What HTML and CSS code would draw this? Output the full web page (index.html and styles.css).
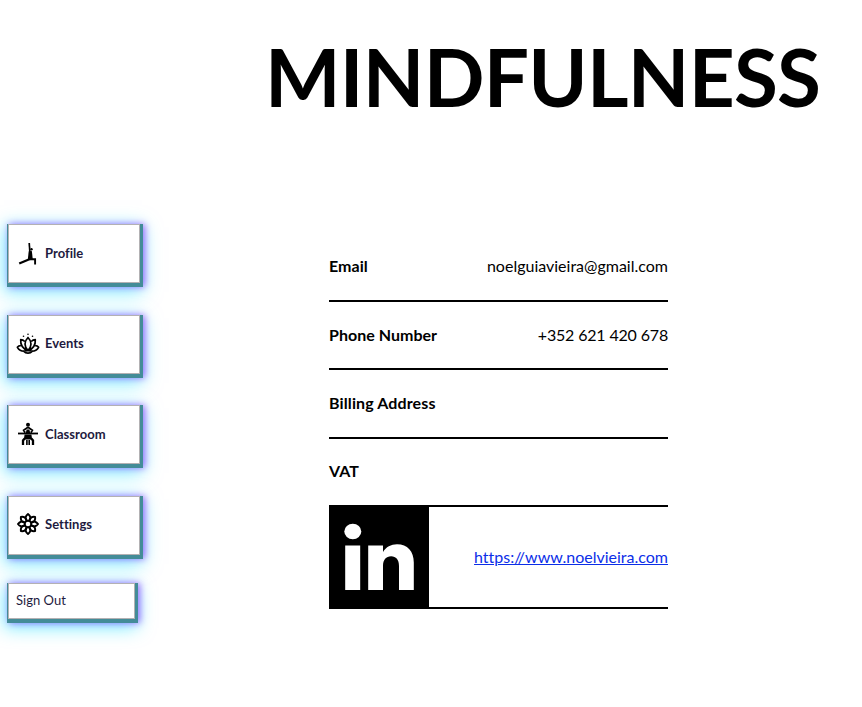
FILE: index.html
```html
<!DOCTYPE html>
<html lang="en">
<head>
<meta charset="utf-8">
<title>Mindfulness</title>
<link rel="stylesheet" href="styles.css">
</head>
<body>
<header class="masthead"><h1>MINDFULNESS</h1></header>
<div class="layout">
  <nav class="menu">
    <a class="card">
      <svg class="icon" viewBox="0 0 24 24" fill="none" stroke="#000"><path d="M13.200 2l.7 9" stroke-width="1.700"/><path d="M12.700 10.200l3.100-.2 1 8.200-5 .5z" fill="#000" stroke="none"/><circle cx="15.500" cy="8.200" r="1.200" fill="#000" stroke="none"/><path d="M14 18L3.200 22.600" stroke-width="2.200"/><path d="M13.500 18.200h5.600v5.300" stroke-width="1.900"/></svg>
      <span>Profile</span>
    </a>
    <a class="card">
      <svg class="icon" viewBox="0 0 24 24" fill="none" stroke="#000" stroke-width="1.700" stroke-linejoin="round"><path d="M12 6.500c-4 4-4 9 0 13 4-4 4-9 0-13zM8.800 10.500C7.500 9.300 6.100 8.800 4.700 8.700c-.3 5 2 9.100 7.300 10.800 5.300-1.700 7.600-5.800 7.300-10.800-1.400.1-2.800.6-4.100 1.800M4.800 14.600c-1.400 0-2.700.6-3.400 1.700 2.300 4 6.600 4.500 10.600 3.200 4 1.300 8.300.8 10.600-3.200-.7-1.100-2-1.700-3.400-1.700M8 20.500c1 1.300 2.300 1.600 4 1.600s3-.3 4-1.600"/><g fill="#000" stroke="none"><circle cx="12" cy="3.300" r=".8"/><circle cx="7.500" cy="5.300" r=".8"/><circle cx="16.500" cy="5.300" r=".8"/></g></svg>
      <span>Events</span>
    </a>
    <a class="card">
      <svg class="icon" viewBox="0 0 24 24" fill="none" stroke="#000"><circle cx="12" cy="2.800" r="2" fill="#000" stroke="none"/><path d="M12 5.300L7.600 8.200l1.500 2.500M12 5.300l4.400 2.900-1.500 2.500" stroke-width="1.700"/><path d="M10.700 7.500h2.600l1.300 4.500H9.400z" fill="#000" stroke="none"/><path d="M2 11.500h20" stroke-width="1.800"/><path d="M8.600 12.500h6.800l.8 5H7.800z" fill="#000" stroke="none"/><path d="M8.700 16.500L7 18.500V23M15.300 16.500l1.700 2V23" stroke-width="2.300"/><path d="M10.900 18v5M13.200 18v5" stroke-width="1.600"/></svg>
      <span>Classroom</span>
    </a>
    <a class="card">
      <svg class="icon" viewBox="0 0 24 24" fill="none" stroke="#000" stroke-width="2" stroke-linejoin="round"><circle cx="12" cy="12" r="3.300"/><g id="pair"><path d="M10.700 8.700C8.500 6 9.800 3.600 12 2c2.200 1.600 3.500 4 1.300 6.700M10.700 15.300c-2.200 2.700-.9 5.100 1.300 6.700 2.200-1.600 3.500-4 1.300-6.700"/></g><use href="#pair" transform="rotate(45 12 12)"/><use href="#pair" transform="rotate(90 12 12)"/><use href="#pair" transform="rotate(135 12 12)"/></svg>
      <span class="plain-letters">Settings</span>
    </a>
    <a class="card signout">Sign Out</a>
  </nav>
  <main class="details">
    <div class="row"><b>Email</b><span>noelguiavieira@gmail.com</span></div>
    <div class="row"><b>Phone Number</b><span class="phone">+352 621 420 678</span></div>
    <div class="row"><b class="billing">Billing Address</b></div>
    <div class="row"><b>VAT</b></div>
    <div class="row link-row">
      <svg class="linkedin" viewBox="0 0 100 100" preserveAspectRatio="none"><path fill="#000" d="M0 0h100v100H0z"/><ellipse cx="23.800" cy="24.500" rx="8.500" ry="7.700" fill="#fff"/><path fill="#fff" d="M16.200 38.500h15V83h-15zM39.200 38.500H54V45c3-4.900 8-7.700 14-7.700 10.500 0 16.800 7.200 16.800 18.200V83H70V59c0-6.200-2.900-9.700-7.900-9.700S54 52.800 54 59v24H39.200z"/></svg>
      <a class="site plain-letters">https://www.noelvieira.com</a>
    </div>
  </main>
</div>
</body>
</html>
```
FILE: styles.css
```css
* { box-sizing: border-box; }
body {
  margin: 0;
  min-height: 707px;
  background: #fff;
  color: #000;
  font-family: Lato, sans-serif;
  font-size: 16px;
  overflow: hidden;
}
.masthead {
  height: 224px;
  padding: 28px 0 0 265px;
}
h1 {
  margin: 0;
  font-size: 80px;
  line-height: 96px;
  font-weight: 700;
  letter-spacing: -.75px;
}
.layout {
  display: flex;
  align-items: flex-start;
}
.menu {
  display: flex;
  flex-direction: column;
  align-items: flex-start;
  width: 329px;
  padding-left: 8px;
}
.card {
  display: flex;
  align-items: center;
  gap: 5px;
  width: 132px;
  height: 59px;
  margin-bottom: 31.600px;
  padding: 0 8px 2px;
  border: 1px solid #b3b1b3;
  background: #fff;
  color: #1e1b40;
  font-size: 13px;
  font-weight: 700;
  letter-spacing: .03px;
  box-shadow:
    1px 2px 0 2px #438c98,
    3px 2px 7px 2px rgba(130, 50, 255, .7),
    -1px 6px 18px 3px rgba(0, 225, 255, .5);
}
.signout {
  width: 127px;
  height: 36px;
  margin: -3.400px 0 0;
  padding: 0 7px 2px;
  font-weight: 400;
}
.icon {
  width: 24px;
  height: 24px;
  margin-left: -1px;
}
.plain-letters { font-variant-ligatures: no-common-ligatures; }
.details {
  width: 339px;
  padding-top: 9.500px;
}
.row {
  display: flex;
  align-items: center;
  justify-content: space-between;
  height: 68.400px;
  border-bottom: 2px solid #000;
}
.row b,
.row span,
.site { padding-bottom: 2px; }
.row b { letter-spacing: .03px; }
.row .billing { letter-spacing: .12px; }
.row .phone { letter-spacing: -.17px; }
.link-row { height: 102px; }
.linkedin {
  width: 100px;
  height: 100px;
}
.site {
  color: #0b2ee8;
  text-decoration: underline;
}
```
